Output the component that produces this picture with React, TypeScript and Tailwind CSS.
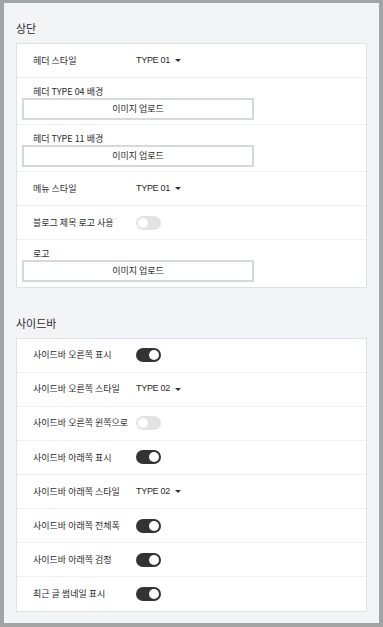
import React from "react";

const font = { fontFamily: '"Noto Sans CJK KR", "Noto Sans", sans-serif' };

function Caret() {
  return <span className="ml-[5px] inline-block w-0 h-0 border-l-[3px] border-r-[3px] border-t-[3px] border-l-transparent border-r-transparent border-t-[#333]" />;
}

function Toggle({ on }: { on: boolean }) {
  return on ? (
    <span className="relative inline-block w-[25px] h-[14px] rounded-full bg-[#333333]">
      <span className="absolute right-[2px] top-[2px] w-[10px] h-[10px] rounded-full bg-white" />
    </span>
  ) : (
    <span className="relative inline-block w-[25px] h-[14px] rounded-full bg-[#e3e3e3]">
      <span className="absolute left-[2px] top-[2px] w-[10px] h-[10px] rounded-full bg-white" />
    </span>
  );
}

type Row =
  | { kind: "select"; label: string; value: string }
  | { kind: "toggle"; label: string; on: boolean }
  | { kind: "upload"; label: string };

function RowView({ row, last, tall }: { row: Row; last: boolean; tall: boolean }) {
  const border = last ? "" : "border-b border-[#eef0f3]";
  if (row.kind === "upload") {
    return (
      <div className={`h-[47px] flex flex-col ${border}`}>
        <div className="pl-[16px] pt-[8px] h-[20px] text-[9px] leading-[12px] text-[#2b2b2b]">{row.label}</div>
        <div className="ml-[5px] w-[232px] h-[22px] border-2 border-[#d5d8dd] bg-white flex items-center justify-center text-[9px] text-[#2b2b2b]">
          이미지 업로드
        </div>
      </div>
    );
  }
  return (
    <div className={`${tall ? "h-[34.1px]" : "h-[34px]"} flex items-center ${border}`}>
      <div className="pl-[16px] w-[119px] text-[9px] text-[#2b2b2b] whitespace-nowrap">{row.label}</div>
      {row.kind === "select" ? (
        <div className="flex items-center text-[9px] text-[#2b2b2b] tracking-[-0.3px]" style={{ fontFamily: '"Liberation Sans", sans-serif' }}>
          {row.value}
          <Caret />
        </div>
      ) : (
        <Toggle on={row.on} />
      )}
    </div>
  );
}

function Card({ rows, tall }: { rows: Row[]; tall: boolean }) {
  return (
    <div className="bg-white border border-[#dde2ea]">
      {rows.map((r, i) => (
        <RowView key={i} row={r} last={i === rows.length - 1} tall={tall} />
      ))}
    </div>
  );
}

export default function App() {
  const top: Row[] = [
    { kind: "select", label: "헤더 스타일", value: "TYPE 01" },
    { kind: "upload", label: "헤더 TYPE 04 배경" },
    { kind: "upload", label: "헤더 TYPE 11 배경" },
    { kind: "select", label: "메뉴 스타일", value: "TYPE 01" },
    { kind: "toggle", label: "블로그 제목 로고 사용", on: false },
    { kind: "upload", label: "로고" },
  ];
  const side: Row[] = [
    { kind: "toggle", label: "사이드바 오른쪽 표시", on: true },
    { kind: "select", label: "사이드바 오른쪽 스타일", value: "TYPE 02" },
    { kind: "toggle", label: "사이드바 오른쪽 윈쪽으로", on: false },
    { kind: "toggle", label: "사이드바 아래쪽 표시", on: true },
    { kind: "select", label: "사이드바 아래쪽 스타일", value: "TYPE 02" },
    { kind: "toggle", label: "사이드바 아래쪽 전체폭", on: true },
    { kind: "toggle", label: "사이드바 아래쪽 검정", on: true },
    { kind: "toggle", label: "최근 글 썸네일 표시", on: true },
  ];
  return (
    <div className="w-[383px] h-[627px] bg-[#a3a3a3] pt-[3px] px-[4px] pb-[4px]" style={font}>
      <div className="h-full bg-[#f3f4f6] px-[12px] pt-[18px]">
        <div className="h-[14px] leading-[14px] text-[11px] text-[#2b2b2b] mb-[8px]">상단</div>
        <Card rows={top} tall={false} />
        <div className="mt-[27.5px] h-[14px] leading-[14px] text-[11px] text-[#2b2b2b] mb-[8px]">사이드바</div>
        <Card rows={side} tall={true} />
      </div>
    </div>
  );
}
